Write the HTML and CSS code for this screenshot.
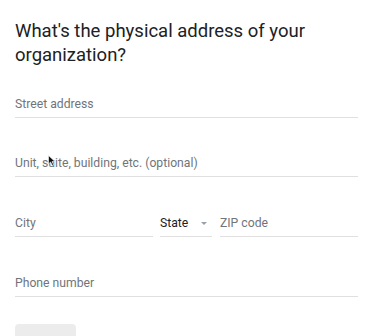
FILE: index.html
```html
<!DOCTYPE html>
<html>
<head>
<meta charset="utf-8">
<link rel="stylesheet" href="styles.css">
</head>
<body>
<div class="page">
  <h1 class="title">What's the physical address of your organization?</h1>
  <div class="field first"><span class="label">Street address</span></div>
  <div class="field second"><span class="label">Unit, suite, building, etc. (optional)</span></div>
  <div class="row">
    <div class="field city"><span class="label">City</span></div>
    <div class="field state"><span class="value">State</span><span class="caret"></span></div>
    <div class="field zip"><span class="label">ZIP code</span></div>
  </div>
  <div class="field"><span class="label">Phone number</span></div>
  <div class="actions"><button class="next">Next</button></div>
</div>
<svg class="cursor" width="8" height="11" viewBox="0 0 8 11"><path d="M0.5 0.5 L0.5 9 L2.6 7 L4.2 10.4 L5.6 9.8 L4.1 6.6 L7 6.6 Z" fill="#111" stroke="#fff" stroke-width="0.6"/></svg>
</body>
</html>
```
FILE: styles.css
```css
html, body {
  margin: 0;
  padding: 0;
  background: #fff;
}
body {
  font-family: Roboto, "Noto Sans", Arial, sans-serif;
  position: relative;
  width: 373px;
  height: 336px;
  overflow: hidden;
}
.page {
  padding: 19px 15px 0 15px;
}
.title {
  margin: 0;
  width: 310px;
  font-weight: 400;
  font-size: 18.5px;
  line-height: 24px;
  color: #202124;
}
.field {
  height: 60px;
  border-bottom: 1px solid #e0e0e0;
  display: flex;
  align-items: flex-end;
  padding-bottom: 6px;
  box-sizing: border-box;
  width: 343px;
}
.field.first {
  height: 51px;
}
.field.second {
  height: 59px;
}
.label {
  font-size: 12.2px;
  color: #70757a;
  line-height: 14px;
}
.value {
  font-size: 12.2px;
  color: #202124;
  line-height: 14px;
}
.row {
  display: flex;
  width: 343px;
}
.row .field {
  width: auto;
}
.city {
  flex: 0 0 138px;
  margin-right: 7px;
}
.state {
  flex: 0 0 52px;
  margin-right: 8px;
}
.zip {
  flex: 1;
}
.caret {
  width: 0;
  height: 0;
  border-left: 3px solid transparent;
  border-right: 3px solid transparent;
  border-top: 3px solid #9aa0a6;
  margin-left: auto;
  margin-right: 5px;
  margin-bottom: 5px;
}
.actions {
  padding-top: 27px;
}
.next {
  width: 61px;
  height: 34px;
  border: none;
  border-radius: 4px;
  background: #ececec;
  color: #bdbdbd;
  font-family: Roboto, Arial, sans-serif;
  font-size: 12.2px;
  padding: 0;
}
.cursor {
  position: absolute;
  left: 48px;
  top: 155px;
}
```
